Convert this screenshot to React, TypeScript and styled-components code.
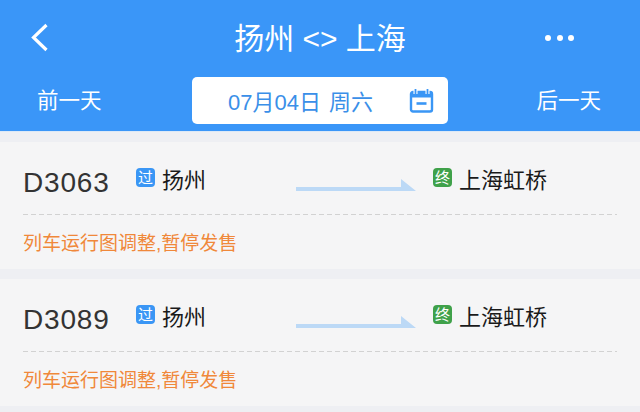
import React from 'react';
import styled, { createGlobalStyle } from 'styled-components';

const FONT = '"Liberation Sans", "Noto Sans CJK SC", sans-serif';

interface ITrain {
  code: string;
  from: string;
  to: string;
  note: string;
}

const TRAINS: ITrain[] = [
  { code: 'D3063', from: '扬州', to: '上海虹桥', note: '列车运行图调整,暂停发售' },
  { code: 'D3089', from: '扬州', to: '上海虹桥', note: '列车运行图调整,暂停发售' },
];

const App: React.FC = () => (
  <Page>
    <GlobalStyle />
    <Header>
      <TopBar>
        <BackIcon width="20" height="30" viewBox="0 0 20 30">
          <path d="M16.5 2 L3.5 14.5 L16.5 27" fill="none" stroke="#fff" strokeWidth="3.2" />
        </BackIcon>
        <Title>扬州 &lt;&gt; 上海</Title>
        <Dots>
          <Dot />
          <Dot />
          <Dot />
        </Dots>
      </TopBar>
      <DateBar>
        <DayLink>前一天</DayLink>
        <DatePicker>
          <DateText>07月04日 周六</DateText>
          <svg width="25" height="25" viewBox="0 0 25 25">
            <rect x="2" y="4" width="21" height="19.5" rx="2" fill="none" stroke="#3a96f5" strokeWidth="2.4" />
            <path d="M2 4 H23 V9.5 H2 Z" fill="#3a96f5" />
            <path d="M6.5 1 V6 M18.5 1 V6" stroke="#fff" strokeWidth="4" />
            <path d="M6.5 1 V6 M18.5 1 V6" stroke="#3a96f5" strokeWidth="1.8" />
            <path d="M7.5 15.5 H17.5" stroke="#3a96f5" strokeWidth="2.6" />
          </svg>
        </DatePicker>
        <DayLink>后一天</DayLink>
      </DateBar>
    </Header>
    <List>
      {TRAINS.map((train) => (
        <Card key={train.code}>
          <Route>
            <Code>{train.code}</Code>
            <Station>
              <Badge color="#3a96f5">过</Badge>
              <StationName>{train.from}</StationName>
            </Station>
            <Arrow width="120" height="13" viewBox="0 0 120 13">
              <path d="M0 8 H105 V0 L120 12 H0 Z" fill="#bcd9f6" />
            </Arrow>
            <Station>
              <Badge color="#3fa14a">终</Badge>
              <StationName>{train.to}</StationName>
            </Station>
          </Route>
          <Divider />
          <Note>{train.note}</Note>
        </Card>
      ))}
    </List>
  </Page>
);

const GlobalStyle = createGlobalStyle`
  html, body {
    margin: 0;
    padding: 0;
    overflow: hidden;
    background-color: #eeeff3;
  }
`;

const Page = styled.div`
  width: 640px;
  height: 412px;
  overflow: hidden;
  font-family: ${FONT};
`;

const Header = styled.div`
  height: 131px;
  background-color: #3a96f8;
  border-bottom: 1px solid #dce9f7;
`;

const TopBar = styled.div`
  display: grid;
  grid-template-columns: 1fr auto 1fr;
  align-items: center;
  height: 75px;
  padding: 0 30px;
`;

const BackIcon = styled.svg`
  display: block;
`;

const Title = styled.div`
  margin-top: -4px;
  color: #ffffff;
  font-size: 30px;
  white-space: nowrap;
`;

const Dots = styled.div`
  display: flex;
  justify-content: flex-end;
  gap: 5.5px;
  margin-right: 36px;
`;

const Dot = styled.span`
  width: 6px;
  height: 6px;
  border-radius: 50%;
  background-color: #ffffff;
`;

const DateBar = styled.div`
  display: flex;
  align-items: center;
  justify-content: space-between;
  box-sizing: border-box;
  height: 51px;
  padding: 0 39px 0 37px;
`;

const DayLink = styled.div`
  color: #ffffff;
  font-size: 21.5px;
  line-height: 48px;
`;

const DatePicker = styled.div`
  display: flex;
  align-items: center;
  justify-content: space-between;
  box-sizing: border-box;
  width: 256px;
  height: 47px;
  margin-left: 2px;
  padding: 0 14px 0 36px;
  border-radius: 5px;
  background-color: #ffffff;
`;

const DateText = styled.span`
  margin-top: -1px;
  color: #3a8fe8;
  font-size: 22px;
  word-spacing: 2px;
  white-space: nowrap;
`;

const List = styled.div`
  display: flex;
  flex-direction: column;
  gap: 10px;
  padding-top: 10px;
`;

const Card = styled.div`
  height: 127px;
  padding: 0 23px;
  background-color: #f5f5f6;
`;

const Route = styled.div`
  display: flex;
  align-items: center;
  height: 72px;
`;

const Divider = styled.div`
  height: 1px;
  background: repeating-linear-gradient(90deg, #d2d2d2 0 5px, transparent 5px 8px);
`;

const Code = styled.div`
  width: 113px;
  padding-top: 10px;
  color: #333333;
  font-size: 28px;
  letter-spacing: 0.8px;
`;

const Station = styled.div`
  display: flex;
  align-items: center;
  gap: 7px;
  margin-top: -1px;
`;

const Badge = styled.span<{ color: string }>`
  display: flex;
  align-items: center;
  justify-content: center;
  width: 19px;
  height: 19px;
  border-radius: 4px;
  background-color: ${(props) => props.color};
  color: #ffffff;
  font-size: 15px;
  line-height: 1;
`;

const StationName = styled.span`
  color: #1a1a1a;
  font-size: 22px;
  white-space: nowrap;
`;

const Arrow = styled.svg`
  display: block;
  flex-shrink: 0;
  margin: 14px 17px 0 90px;
`;

const Note = styled.div`
  padding-top: 16px;
  color: #f0883a;
  font-size: 19px;
  line-height: 26px;
  white-space: nowrap;
`;

export default App;
